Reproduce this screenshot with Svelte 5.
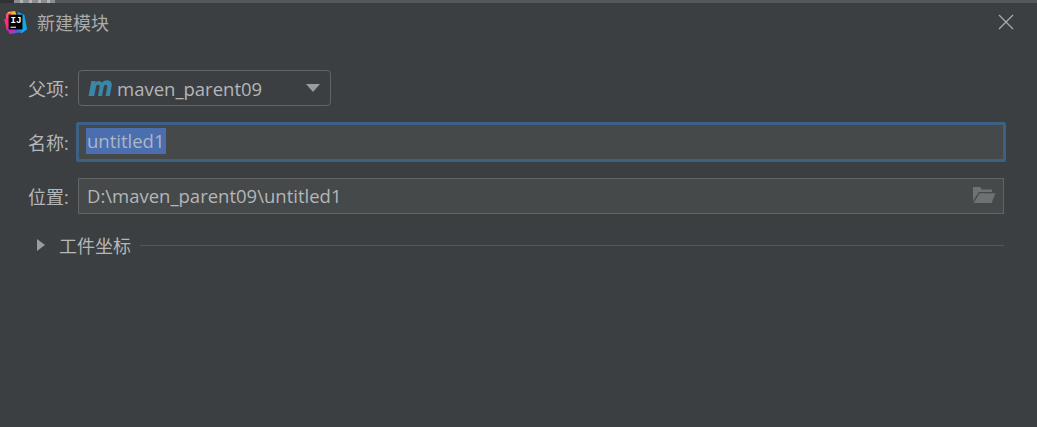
<script>
  let parent = "maven_parent09";
  let name = "untitled1";
  let location = "D:\\maven_parent09\\untitled1";
</script>

<div class="dialog">
  <div class="behind">
    <span class="behind-edge"></span>
    <span class="behind-tab"></span>
    <span class="behind-rest"></span>
  </div>

  <header class="titlebar">
    <svg class="logo" width="24" height="24" viewBox="0 0 26 26" aria-hidden="true">
      <path d="M4 1 L12 0 L14 6 L3 9 Z" fill="#f9b03c" />
      <path d="M2 3 L8 2 L8 19 L3 21 Z" fill="#fc4f7e" />
      <path d="M0 9 L7 7 L8 19 L3 20 Z" fill="#f5317f" />
      <path d="M15 1 L22 4 L25 20 L19 24 L14 21 Z" fill="#15a5e8" />
      <path d="M3 18 L14 19 L12 24 L6 25 Z" fill="#c02cc0" />
      <path d="M14 19 L20 23 L10 24 Z" fill="#4465d8" />
      <rect x="5" y="4" width="15" height="16" fill="#000" />
      <rect x="7" y="17" width="6" height="1.2" fill="#e8e8e8" />
      <text x="7" y="13" class="logo-text">IJ</text>
    </svg>
    <span class="title">新建模块</span>
    <svg class="close" width="16" height="16" viewBox="0 0 16 16" aria-hidden="true">
      <path d="M1 1 L15 15 M15 1 L1 15" stroke="#a7a9ab" stroke-width="1.3" fill="none" />
    </svg>
  </header>

  <main class="form">
    <div class="row row-parent">
      <span class="label">父项:</span>
      <div class="combo">
        <svg class="maven" width="24" height="16" viewBox="0 0 24 16" aria-hidden="true">
          <path d="M0.5 16 L3.4 1 L7.6 1 L7.3 2.8 C9 0.6 12 0 13.6 2.8 C15.6 0.4 19.6 -0.4 22.2 1.2 C24 2.4 24 4.6 23.6 6.6 L21.8 16 L17.6 16 L19.2 7 C19.6 4.4 16.8 4 15.8 6.6 L14 16 L10 16 L11.6 7 C12 4.4 9 4 8 6.8 L6.2 16 Z" fill="#3a87a8" />
        </svg>
        <span class="combo-text">{parent}</span>
        <svg class="arrow" width="14" height="8" viewBox="0 0 14 8" aria-hidden="true">
          <path d="M0 0 L14 0 L7 8 Z" fill="#9a9c9e" />
        </svg>
      </div>
    </div>

    <div class="row row-name">
      <span class="label">名称:</span>
      <div class="input focused"><span class="selected">{name}</span></div>
    </div>

    <div class="row row-location">
      <span class="label">位置:</span>
      <div class="input path">
        <span class="path-text">{location}</span>
        <svg class="folder" width="24" height="18" viewBox="0 0 24 18" aria-hidden="true">
          <path d="M1 1 L8 1 L10 3.5 L20 3.5 L20 6 L7 6 L2.4 13 L1 16 Z" fill="#6e7274" />
          <path d="M7.6 7.2 L23.4 7.2 L19.6 17 L1.6 17 Z" fill="#6e7274" />
        </svg>
      </div>
    </div>

    <div class="section">
      <svg class="caret" width="8" height="12" viewBox="0 0 8 12" aria-hidden="true">
        <path d="M0 0 L8 6 L0 12 Z" fill="#9a9c9e" />
      </svg>
      <span class="section-title">工件坐标</span>
      <span class="rule"></span>
    </div>
  </main>
</div>

<style>
  :global(body) {
    margin: 0;
    background: #3c3f41;
  }
  .dialog {
    width: 1037px;
    height: 427px;
    overflow: hidden;
    background: #3c3f41;
    color: #b4b6b8;
    font-family: "Open Sans", "Noto Sans CJK SC", sans-serif;
    font-size: 18.5px;
  }
  .behind {
    display: flex;
    height: 3px;
    background: #55585a;
    overflow: hidden;
  }
  .behind-edge {
    width: 14px;
    background: #2f3133;
  }
  /* sliver of the window behind the dialog, its text is cut off past reading */
  .behind-tab {
    width: 41px;
    background: repeating-linear-gradient(90deg, #8a8c8e 0 6px, #b4b5b6 6px 9px);
  }
  .behind-rest {
    flex: 1;
  }
  .titlebar {
    display: flex;
    align-items: center;
    height: 38px;
    padding: 0 23px 0 4px;
  }
  .logo {
    flex: none;
    margin-top: 1px;
  }
  .logo-text {
    font-family: "Liberation Mono", monospace;
    font-size: 10px;
    font-weight: 700;
    fill: #fff;
  }
  .title {
    margin-left: 9px;
    font-size: 18px;
    color: #a9abad;
  }
  .close {
    margin-left: auto;
  }
  .form {
    display: flex;
    flex-direction: column;
    padding: 29px 33px 0 28px;
  }
  .row {
    display: flex;
    align-items: center;
  }
  .row-name {
    margin-top: 16px;
  }
  .row-location {
    margin-top: 16px;
  }
  .label {
    flex: none;
    width: 50px;
    font-size: 18px;
  }
  .combo {
    box-sizing: border-box;
    display: flex;
    align-items: center;
    width: 253px;
    height: 36px;
    padding: 0 10px 0 9px;
    border: 1px solid #646464;
    border-radius: 4px;
    background: #3c3f41;
  }
  .combo-text {
    margin-left: 5px;
  }
  .arrow {
    margin-left: auto;
  }
  .input {
    box-sizing: border-box;
    display: flex;
    align-items: center;
    flex: 1;
    height: 36px;
    padding: 0 8px 2px;
    border: 1px solid #646464;
    background: #45494a;
  }
  .focused {
    height: 40px;
    margin-left: -2px;
    margin-right: -2px;
    padding: 0 7px 2px;
    border: 3px solid #3d6185;
    border-radius: 2px;
  }
  .selected {
    padding: 0 1px;
    background: #4b6eaf;
    line-height: 26px;
    color: #a9b7c6;
  }
  .folder {
    margin-left: auto;
    margin-right: -1px;
  }
  .section {
    display: flex;
    align-items: center;
    margin-top: 18px;
    padding-left: 9px;
  }
  .section-title {
    margin-left: 14px;
    font-size: 18px;
  }
  .rule {
    flex: 1;
    height: 1px;
    margin-left: 9px;
    background: #555759;
  }
</style>
